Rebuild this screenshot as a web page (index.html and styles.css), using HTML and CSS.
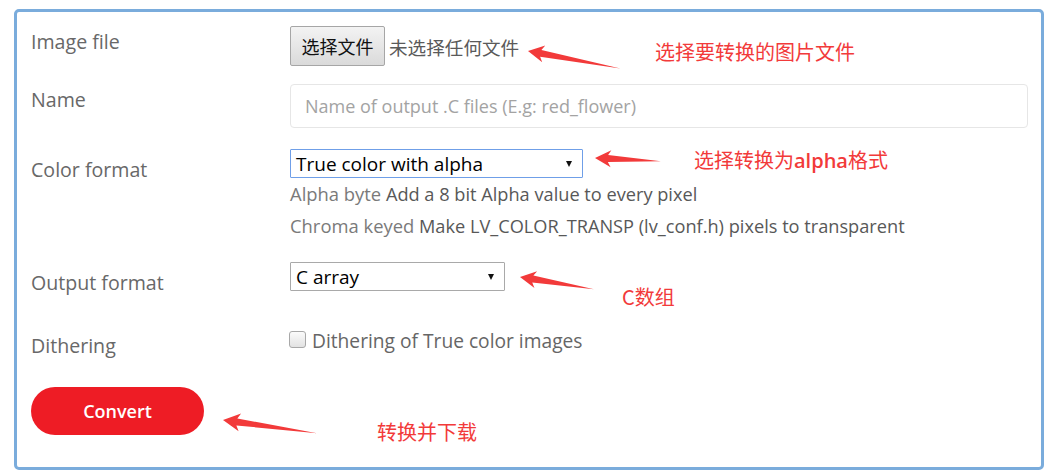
FILE: index.html
```html
<!DOCTYPE html>
<html lang="en">
<head>
<meta charset="utf-8">
<title>Image converter</title>
<link rel="stylesheet" href="styles.css">
</head>
<body>
<div class="page">
  <form class="frame">
    <div class="row">
      <div class="label">Image file</div>
      <div class="control file-control">
        <span class="file-btn">选择文件</span>
        <span class="file-none">未选择任何文件</span>
      </div>
    </div>
    <div class="row row-name">
      <div class="label">Name</div>
      <div class="control">
        <div class="text-input">Name of output .C files (E.g: red_flower)</div>
      </div>
    </div>
    <div class="row row-color">
      <div class="label label-low">Color format</div>
      <div class="control">
        <div class="select select-focus select-wide"><span>True color with alpha</span><i class="caret"></i></div>
        <div class="help"><span class="help-key">Alpha byte</span> Add a 8 bit Alpha value to every pixel</div>
        <div class="help"><span class="help-key">Chroma keyed</span> Make LV_COLOR_TRANSP (lv_conf.h) pixels to transparent</div>
      </div>
    </div>
    <div class="row row-output">
      <div class="label label-low">Output format</div>
      <div class="control">
        <div class="select select-narrow"><span>C array</span><i class="caret"></i></div>
      </div>
    </div>
    <div class="row row-dither">
      <div class="label label-dither">Dithering</div>
      <div class="control check-control">
        <span class="checkbox"></span>
        <span class="check-text">Dithering of True color images</span>
      </div>
    </div>
    <div class="actions">
      <span class="convert">Convert</span>
    </div>
  </form>

  <div class="notes">
    <svg class="arrows" width="1062" height="475" viewBox="0 0 1062 475">
      <g fill="#f23a3a">
        <polygon transform="translate(528 51) rotate(10.5)" points="0,0 16,-8.5 13,-3.5 94,0.3 13,3.5 16,8.5"/>
        <polygon transform="translate(595 158) rotate(2.6)" points="0,0 16,-8.5 13,-3.5 66,0.3 13,3.5 16,8.5"/>
        <polygon transform="translate(520 277) rotate(9.2)" points="0,0 16,-8.5 13,-3.5 75,0.3 13,3.5 16,8.5"/>
        <polygon transform="translate(223 420) rotate(7.9)" points="0,0 17,-9 14,-3.5 95,0.3 14,3.5 17,9"/>
      </g>
    </svg>
    <div class="note note-1">选择要转换的图片文件</div>
    <div class="note note-2">选择转换为<b>alpha</b>格式</div>
    <div class="note note-3">C数组</div>
    <div class="note note-4">转换并下载</div>
  </div>
</div>
</body>
</html>
```

FILE: styles.css
```css
html, body {
  margin: 0;
  padding: 0;
  background: #ffffff;
}

.page {
  position: relative;
  width: 1062px;
  height: 475px;
  overflow: hidden;
}

.frame {
  box-sizing: border-box;
  width: 1030px;
  height: 461px;
  margin: 9px 0 0 14px;
  border: 3px solid #7aacdc;
  border-radius: 5px;
  padding: 14px 13px 32px 14px;
  font-family: "Open Sans", "Noto Sans CJK SC", sans-serif;
}

.row {
  display: grid;
  grid-template-columns: 259px 1fr;
  align-items: start;
}

.row-name { margin-top: 18px; }
.row-color { margin-top: 21px; }
.row-output { margin-top: 20px; }
.row-dither { margin-top: 34px; }

.label {
  margin-top: 4px;
  font-size: 19.6px;
  line-height: 24px;
  color: #686868;
}

.label-low { margin-top: 9px; }
.label-dither { margin-top: 5px; }

.control {
  min-width: 0;
}

.file-control {
  display: flex;
  align-items: center;
  height: 40px;
}

.file-btn {
  box-sizing: border-box;
  display: inline-flex;
  align-items: center;
  justify-content: center;
  width: 95px;
  height: 40px;
  border: 1px solid #a6a6a6;
  border-radius: 2px;
  background: linear-gradient(#f3f3f3, #dadada);
  font-family: "Noto Sans CJK SC", sans-serif;
  font-size: 18px;
  color: #111111;
}

.file-none {
  margin-left: 4px;
  font-family: "Noto Sans CJK SC", sans-serif;
  font-size: 18.6px;
  color: #5a5a5a;
}

.text-input {
  box-sizing: border-box;
  height: 44px;
  border: 1px solid #e6e6e6;
  border-radius: 4px;
  padding: 0 14px;
  display: flex;
  align-items: center;
  font-size: 18px;
  color: #a3a3a3;
}

.select {
  box-sizing: border-box;
  height: 29px;
  display: flex;
  align-items: center;
  justify-content: space-between;
  padding: 0 10px 0 5px;
  border: 1px solid #a9a9a9;
  border-radius: 1px;
  font-size: 19px;
  color: #000000;
}

.select-focus {
  border-color: #6f9fe8;
}

.select-wide { width: 293px; }
.select-narrow { width: 215px; }

.caret {
  width: 0;
  height: 0;
  border-left: 3.5px solid transparent;
  border-right: 3.5px solid transparent;
  border-top: 6px solid #111111;
}

.help {
  font-size: 18.2px;
  line-height: 32px;
  color: #585858;
  white-space: nowrap;
}

.help-key {
  font-size: 18.4px;
  color: #7a7a7a;
}

.check-control {
  display: flex;
  align-items: flex-start;
}

.checkbox {
  box-sizing: border-box;
  width: 17px;
  height: 17px;
  margin: 2px 6px 0 -1px;
  border: 1px solid #a8a8a8;
  border-radius: 3px;
  background: linear-gradient(#fbfbfb, #e2e2e2);
  flex: none;
}

.check-text {
  font-size: 19.2px;
  line-height: 24px;
  color: #666666;
}

.actions {
  margin-top: 29px;
}

.convert {
  display: inline-flex;
  align-items: center;
  justify-content: center;
  width: 173px;
  height: 48px;
  border-radius: 24px;
  background: #ee1c25;
  color: #ffffff;
  font-size: 18px;
  font-weight: 600;
}

.notes {
  position: absolute;
  inset: 0;
  pointer-events: none;
}

.arrows {
  position: absolute;
  left: 0;
  top: 0;
}

.note {
  position: absolute;
  font-family: "Noto Sans CJK SC", sans-serif;
  font-size: 20px;
  line-height: 20px;
  color: #f23a3a;
  white-space: nowrap;
}

.note b {
  font-family: "Open Sans", sans-serif;
  font-weight: 600;
}

.note-1 { left: 655px; top: 42px; }
.note-2 { left: 694px; top: 150px; }
.note-3 { left: 622px; top: 287px; }
.note-4 { left: 377px; top: 422px; }
```
